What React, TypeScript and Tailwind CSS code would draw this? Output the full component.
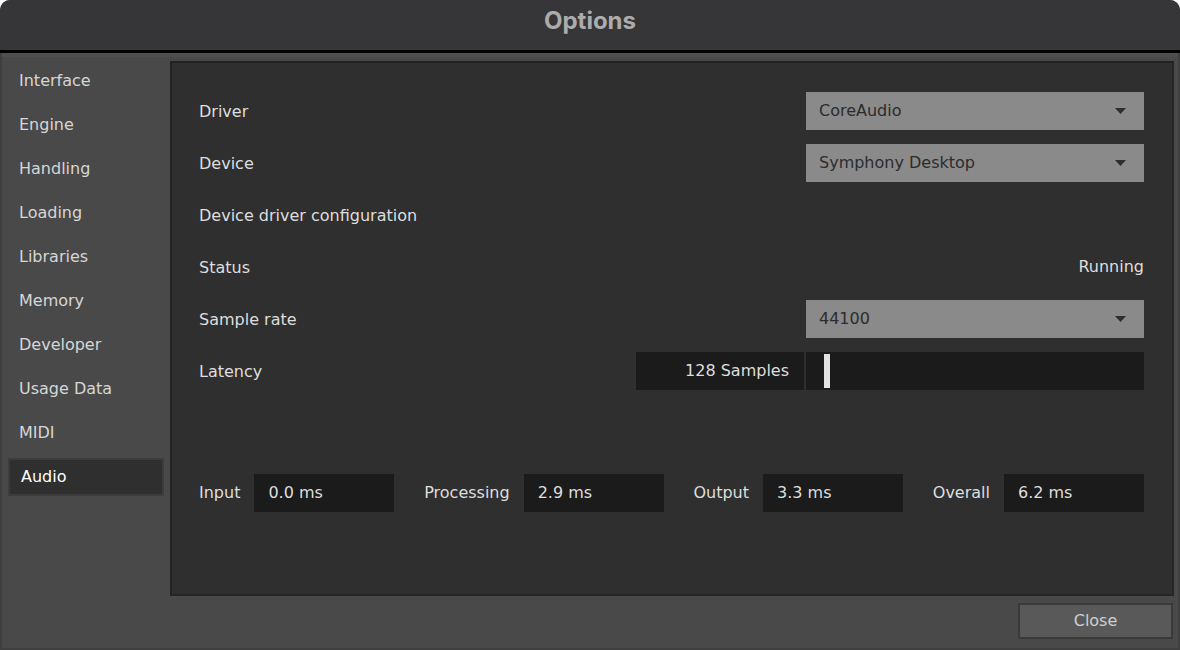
import { useState } from 'react';

const sections = [
  'Interface',
  'Engine',
  'Handling',
  'Loading',
  'Libraries',
  'Memory',
  'Developer',
  'Usage Data',
  'MIDI',
  'Audio',
];

function Caret() {
  return (
    <svg width="11" height="6" viewBox="0 0 11 6" className="shrink-0">
      <path d="M0 0 H11 L5.5 6 Z" fill="#2e2e2e" />
    </svg>
  );
}

function Select({ value }: { value: string }) {
  return (
    <div className="flex h-[38px] w-[338px] items-center justify-between bg-[#8a8a8a] pl-[13px] pr-[18px] text-[#2c2c2c]">
      <span>{value}</span>
      <Caret />
    </div>
  );
}

function Row({ label, children }: { label: string; children?: React.ReactNode }) {
  return (
    <div className="flex h-[38px] items-center justify-between">
      <span className="pt-[2px]">{label}</span>
      {children}
    </div>
  );
}

function Readout({ label, value }: { label: string; value: string }) {
  return (
    <div className="flex items-center">
      <span>{label}</span>
      <div className="ml-[14px] flex h-[38px] w-[140px] items-center bg-[#1b1b1b] pl-[14px]">
        {value}
      </div>
    </div>
  );
}

export default function App() {
  const [active, setActive] = useState('Audio');

  return (
    <div
      className="flex h-[650px] w-[1180px] flex-col overflow-hidden rounded-t-[10px] bg-[#494949] text-[16px] text-[#dedede]"
      style={{ fontFamily: '"DejaVu Sans", sans-serif' }}
    >
      {/* title bar */}
      <div className="flex h-[50px] shrink-0 items-center justify-center bg-[#363638] pb-[8px]">
        <h1
          className="text-[24px] font-bold text-[#acacac]"
          style={{ fontFamily: 'Inter, "Liberation Sans", sans-serif' }}
        >
          Options
        </h1>
      </div>
      <div className="h-[3px] shrink-0 bg-black" />

      <div className="flex flex-1 flex-col border-x-2 border-b-2 border-[#3f3f3f] bg-[#494949]">
        <div className="h-[4px] bg-[#4f4f4f]" />
        <div className="flex flex-1 gap-[6px] pl-[6px] pr-[4px] pt-[4px]">
          {/* section list */}
          <nav className="-mt-[2px] flex w-[156px] flex-col">
            {sections.map((s) => (
              <button
                key={s}
                onClick={() => setActive(s)}
                className="flex h-[44px] items-center py-[3px] text-left"
              >
                <span
                  className={`flex h-full w-full items-center pl-[11px] ${
                    active === s ? 'border-2 border-[#3c3c3c] bg-[#2f2f2f] pl-[9px] text-white' : 'text-[#d6d6d6]'
                  }`}
                >
                  {s}
                </span>
              </button>
            ))}
          </nav>

          {/* audio settings panel */}
          <div className="flex h-[535px] flex-1 flex-col border-2 border-[#222222] border-b-[#252525] border-r-[#252525] bg-[#2f2f2f] pl-[27px] pr-[28px] pt-[29px]">
            <div className="flex flex-col gap-[14px]">
              <Row label="Driver">
                <Select value="CoreAudio" />
              </Row>
              <Row label="Device">
                <Select value="Symphony Desktop" />
              </Row>
              <Row label="Device driver configuration" />
              <Row label="Status">
                <span>Running</span>
              </Row>
              <Row label="Sample rate">
                <Select value="44100" />
              </Row>
              <Row label="Latency">
                <div className="flex h-[38px] gap-[2px]">
                  <div className="flex w-[168px] items-center justify-end bg-[#1b1b1b] pr-[15px]">
                    128 Samples
                  </div>
                  <div className="flex w-[338px] items-center bg-[#1b1b1b] pl-[18px]">
                    <div className="h-[34px] w-[6px] bg-[#e2e2e2]" />
                  </div>
                </div>
              </Row>
            </div>

            <div className="mt-[84px] flex items-center justify-between">
              <Readout label="Input" value="0.0 ms" />
              <Readout label="Processing" value="2.9 ms" />
              <Readout label="Output" value="3.3 ms" />
              <Readout label="Overall" value="6.2 ms" />
            </div>
          </div>
        </div>

        <div className="flex justify-end pb-[9px] pr-[5px] pt-[5px]">
          <button className="h-[36px] w-[155px] border-2 border-[#3a3a3a] bg-[#595959] text-[#cfcfcf]">
            Close
          </button>
        </div>
      </div>
    </div>
  );
}
